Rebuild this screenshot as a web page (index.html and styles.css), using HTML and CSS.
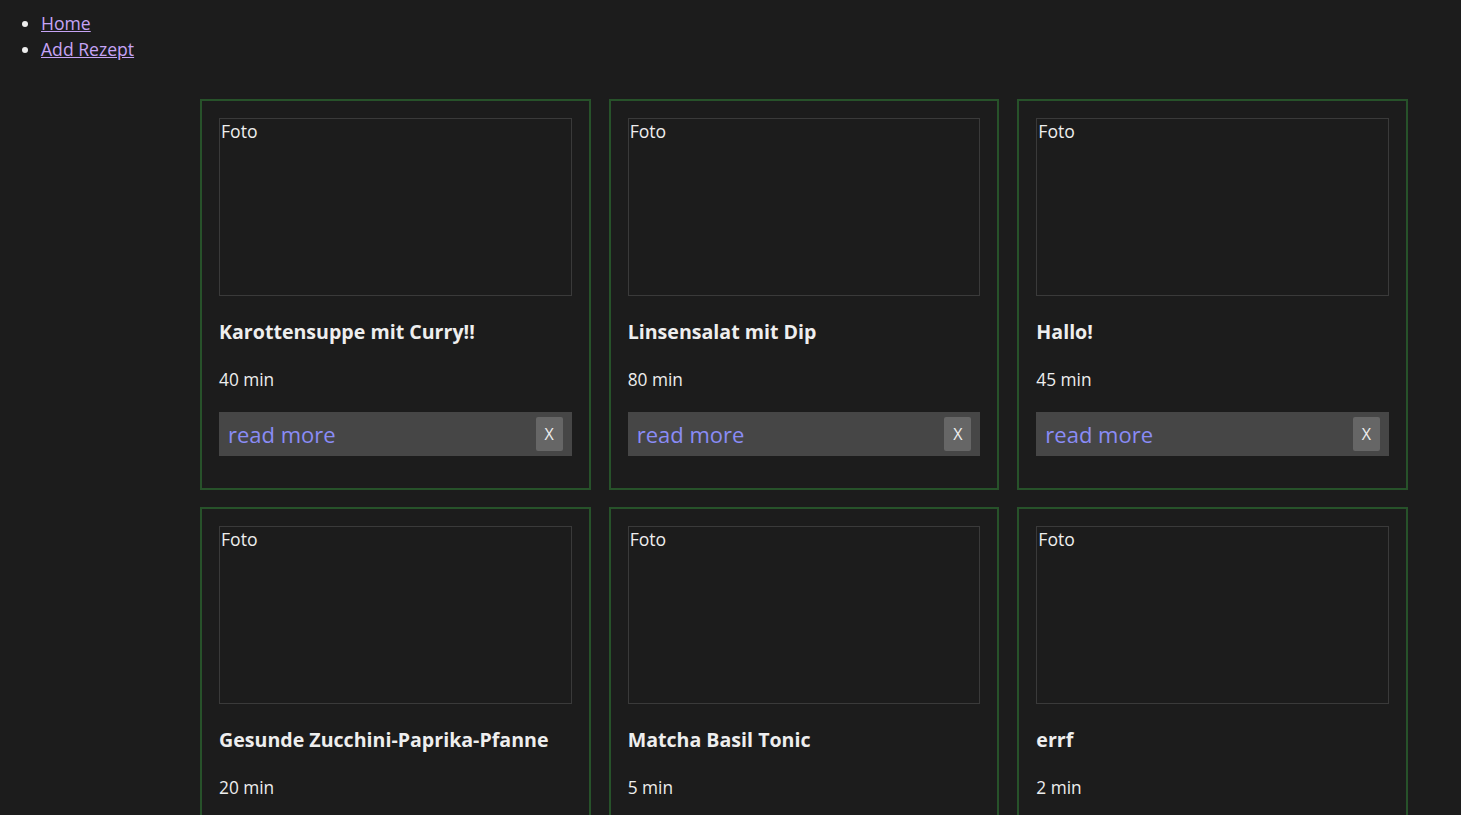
FILE: index.html
```html
<!DOCTYPE html>
<html lang="de">
<head>
<meta charset="utf-8">
<title>Rezepte</title>
<link rel="stylesheet" href="styles.css">
</head>
<body>
<nav class="nav">
  <ul class="nav-list">
    <li><a class="nav-link" href="#">Home</a></li>
    <li><a class="nav-link" href="#">Add Rezept</a></li>
  </ul>
</nav>
<main class="grid">
  <article class="card">
    <div class="photo">Foto</div>
    <h3 class="title">Karottensuppe mit Curry!!</h3>
    <p class="time">40 min</p>
    <div class="bar"><a class="more" href="#">read more</a><button class="del">X</button></div>
  </article>
  <article class="card">
    <div class="photo">Foto</div>
    <h3 class="title">Linsensalat mit Dip</h3>
    <p class="time">80 min</p>
    <div class="bar"><a class="more" href="#">read more</a><button class="del">X</button></div>
  </article>
  <article class="card">
    <div class="photo">Foto</div>
    <h3 class="title">Hallo!</h3>
    <p class="time">45 min</p>
    <div class="bar"><a class="more" href="#">read more</a><button class="del">X</button></div>
  </article>
  <article class="card">
    <div class="photo">Foto</div>
    <h3 class="title">Gesunde Zucchini-Paprika-Pfanne</h3>
    <p class="time">20 min</p>
    <div class="bar"><a class="more" href="#">read more</a><button class="del">X</button></div>
  </article>
  <article class="card">
    <div class="photo">Foto</div>
    <h3 class="title">Matcha Basil Tonic</h3>
    <p class="time">5 min</p>
    <div class="bar"><a class="more" href="#">read more</a><button class="del">X</button></div>
  </article>
  <article class="card">
    <div class="photo">Foto</div>
    <h3 class="title">errf</h3>
    <p class="time">2 min</p>
    <div class="bar"><a class="more" href="#">read more</a><button class="del">X</button></div>
  </article>
</main>
</body>
</html>
```

FILE: styles.css
```css
html, body {
  background: #1c1c1c;
}
body {
  margin: 8px;
  color: #eeeeee;
  font-family: "Open Sans", "Noto Sans", sans-serif;
  font-size: 18px;
}
.nav-list {
  margin: 2px 0 0 0;
  padding-left: 33px;
  line-height: 26px;
  font-size: 17.6px;
}
.nav-link {
  color: #c6a4f6;
}
.grid {
  margin: 37px 0 0 192px;
  width: 1208px;
  display: grid;
  grid-template-columns: repeat(3, 1fr);
  column-gap: 18px;
  row-gap: 17px;
}
.card {
  border: 2px solid #27522a;
  padding: 17px 17px 32px 17px;
}
.photo {
  height: 176px;
  border: 1px solid #3a3a3a;
  font-size: 17.6px;
  line-height: 24px;
  padding-left: 1px;
}
.title {
  margin: 24px 0 0 0;
  font-size: 19.6px;
  line-height: 24px;
  font-weight: 700;
}
.time {
  margin: 24px 0 0 0;
  font-size: 17.3px;
  line-height: 24px;
}
.bar {
  margin-top: 20px;
  height: 44px;
  background: #464646;
  display: flex;
  align-items: center;
  justify-content: space-between;
  padding: 0 9px 0 9px;
}
.more {
  color: #8a8cf6;
  text-decoration: none;
  font-size: 22px;
}
.del {
  width: 27px;
  height: 34px;
  background: #666666;
  color: #eeeeee;
  border: none;
  border-radius: 2px;
  font-family: inherit;
  font-size: 16px;
  padding: 0;
}
```
